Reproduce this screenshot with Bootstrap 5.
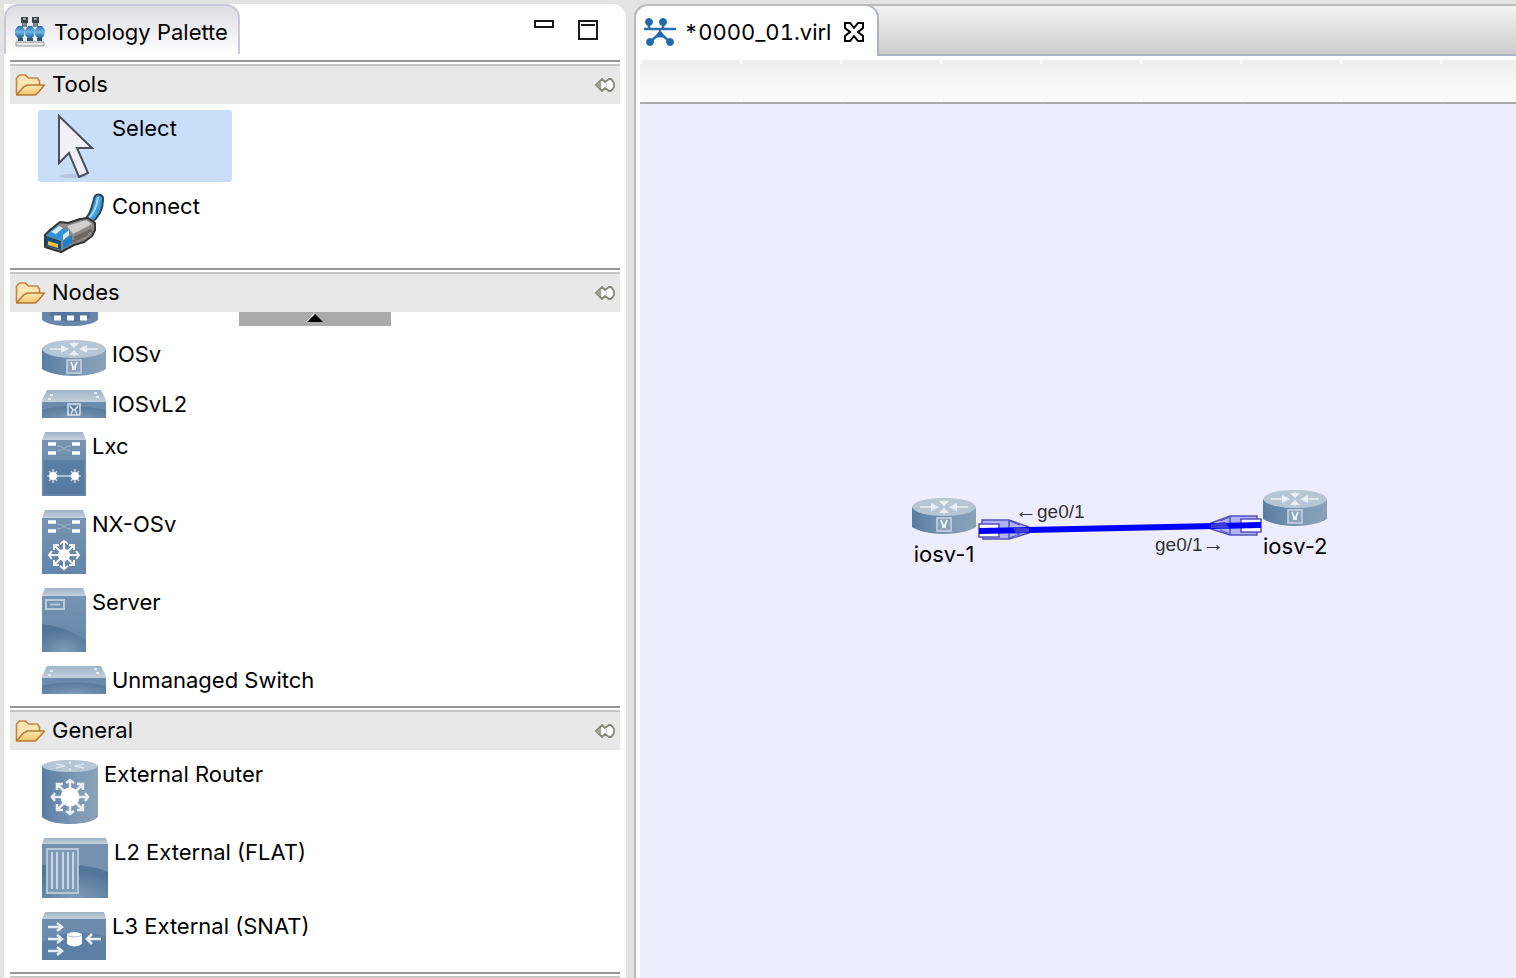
<!DOCTYPE html>
<html lang="en">
<head>
<meta charset="utf-8">
<meta name="viewport" content="width=device-width, initial-scale=1">
<title>Topology editor</title>
<link rel="stylesheet" href="https://cdn.jsdelivr.net/npm/bootstrap@5.3.0/dist/css/bootstrap.min.css">
<style>
body{background:#e3e3e3;color:#000;font-family:Inter,"Liberation Sans",sans-serif;font-size:22px;line-height:28px}
svg{display:block;flex:none}
button{color:inherit;background:none;border:0;padding:0}
.workbench{min-height:100vh;padding:4px 0 0 4px;gap:8px}
.palette{width:622px;background:#fff;border-radius:0 14px 0 0}
.palette-tab{width:236px;height:50px;padding:3px 10px 0 9px;gap:9px;border:2px solid #c9c9d9;border-bottom:0;border-radius:14px 14px 0 0;background:linear-gradient(#dcdce3,#fff)}
.view-actions{padding:13px 27px 0 0;gap:22px}
.drawers{padding:6px 6px 0}
.rules{height:6px;border-top:2px solid #969696;border-bottom:2px solid #c6c6c6}
.drawer-head{height:38px;padding:0 5px;gap:6px;background:#e8e8e8}
.drawer-head h2{font-size:22px;line-height:28px;font-weight:400;padding-bottom:2px}
.drawer-items{padding:6px 28px 8px;gap:6px}
.tool{padding:4px;gap:6px;border-radius:3px;text-align:left}
.tool.selected{width:194px;background:#c9def8}
.tool.cut{height:18px;padding-top:0;overflow:hidden}
.scroll-up{width:152px;height:14px;background:#aaa}
.editor{border-left:2px solid #bbb;border-radius:14px 0 0 0;background:#fff;min-width:0}
.editor-tabs{height:52px}
.editor-tab{position:relative;background:#fff;width:245px;padding:2px 12px 0 8px;gap:8px;margin-left:-2px;border:2px solid #bbb;border-right-color:#a8b2c8;border-bottom:0;border-radius:14px 14px 0 0;font-variant-numeric:tabular-nums}
.tab-rest{border-top:2px solid #bbb;border-bottom:2px solid #a8b2c8;background:linear-gradient(#f3f3f3,#cecece);margin-left:-14px;padding-left:14px}
.ruler{height:44px;margin:4px 0 0 4px;border-bottom:2px solid #aaa;background:repeating-linear-gradient(90deg,#fff 0 2px,transparent 2px 100px) 0 0/100% 4px no-repeat,repeating-linear-gradient(90deg,#fff 0 2px,transparent 2px 100px) 0 100%/100% 3px no-repeat,linear-gradient(#ececec,#f9f9f9 60%)}
.topology{margin-left:4px;background:#eeedfe;overflow:hidden}
.device,.port,.wire{position:absolute}
.device{gap:6px}
.port{font:19px/24px "Liberation Sans",sans-serif;color:#333;white-space:nowrap}
.port-arrow{font-size:22px}
</style>
</head>
<body>
<svg width="0" height="0" class="position-absolute" aria-hidden="true">
<defs>
<linearGradient id="side"><stop stop-color="#587da3"/><stop offset=".6" stop-color="#7e99b5"/><stop offset="1" stop-color="#8ba1b9"/></linearGradient>
<linearGradient id="lid" x2="0" y2="1"><stop stop-color="#9fb4c8"/><stop offset="1" stop-color="#c3d0dc"/></linearGradient>
<linearGradient id="front" x2="0" y2="1"><stop stop-color="#7794b3"/><stop offset="1" stop-color="#6384a8"/></linearGradient>
<radialGradient id="glow" cx=".5" cy="1" r=".8"><stop stop-color="#7f9bb8"/><stop offset="1" stop-color="#527599"/></radialGradient>
<linearGradient id="fold" x2="0" y2="1"><stop stop-color="#fdeab0"/><stop offset="1" stop-color="#f3c467"/></linearGradient>
<linearGradient id="blue" x2="0" y2="1"><stop stop-color="#2a6fa8"/><stop offset=".5" stop-color="#6fb6e6"/><stop offset="1" stop-color="#1d5f99"/></linearGradient>
<symbol id="router" viewBox="0 0 64 36">
<path d="M0 9V29C6 33 18 36 32 36S58 33 64 29V9Z" fill="url(#side)"/>
<path d="M0 9C2 3 15 0 32 0S62 3 64 9C62 15 48 18 32 18S2 15 0 9Z" fill="#b7c6d4"/>
<path d="M8 9H22M56 9H42M32 2V7M32 16V11" fill="none" stroke="#dbe4eb" stroke-width="2"/>
<path d="M19 5L27 9L19 13ZM45 5L37 9L45 13ZM27 3L32 8L37 3ZM27 15L32 10L37 15Z" fill="#e9eff4"/>
<path d="M25 20H39V33H25Z" fill="#8ba3bc" stroke="#c9d6e2" stroke-width="1.500"/><path d="M29 22L31 27V29H33V27L35 22" fill="none" stroke="#e6edf3" stroke-width="2"/>
</symbol>
<symbol id="switch" viewBox="0 0 64 28">
<path d="M5 0H59L64 10V12H0V10Z" fill="url(#lid)"/><path d="M0 12H64V28H0Z" fill="url(#glow)"/>
<path d="M0 12H64V20C48 16 20 15 0 20Z" fill="#6b8bad"/>
<path d="M8 5H11M6 9H9M52 3H55M54 7H57" stroke="#e6edf3" stroke-width="2"/>
</symbol>
<symbol id="tower" viewBox="0 0 44 64">
<path d="M3 0H41L44 8H0Z" fill="url(#lid)"/><path d="M0 8H44V64H0Z" fill="url(#front)"/>
</symbol>
<symbol id="ports" viewBox="0 0 44 32">
<path d="M6 12H14M30 12H38M6 21H14M30 21H38" stroke="#fff" stroke-width="3.500"/><path d="M15 14C22 14 22 19 29 19M15 19C22 19 22 14 29 14" fill="none" stroke="#a3b7cb"/>
</symbol>
<symbol id="folder" viewBox="0 0 30 24">
<path d="M1 21V5L4 2H10L13 5H22L24 8V12" fill="#fbe6b3" stroke="#bd8542" stroke-width="1.600"/>
<path d="M1 22L8 14L12 12H29L23 19L20 22Z" fill="url(#fold)" stroke="#b87a35" stroke-width="1.600" stroke-linejoin="round"/>
</symbol>
<symbol id="pin" viewBox="0 0 20 14">
<path d="M1 7L7 1L10 4L14 1H16L19 5V9L16 13H14L10 10L7 13Z" fill="#fff" stroke="#85857a" stroke-width="1.800"/><path d="M1 7L6 3V11Z" fill="#a2a296"/><path d="M10 4L12 7L10 10" fill="none" stroke="#c9c9bf"/>
</symbol>
</defs>
</svg>

<div class="workbench d-flex">
<aside class="palette flex-shrink-0">
<header class="d-flex justify-content-between align-items-start">
<div class="palette-tab d-flex align-items-center">
<svg width="30" height="32" viewBox="0 0 30 32" aria-hidden="true">
<path d="M6 1H13V7H6ZM17 1H24V7H17Z" fill="#3e454c"/><path d="M8 3H11M19 3H22" stroke="#9ba3aa" stroke-width="2"/><path d="M7 7H12V11H7ZM18 7H23V11H18Z" fill="#77838c"/>
<path d="M3 10H7L10 14L9 20L7 22H3L0 19V14ZM13 10H17L20 14L19 20L17 22H13L10 19V14ZM23 10H27L30 14L29 20L27 22H23L20 19V14Z" fill="url(#blue)"/>
<path d="M3 22H8V25H3ZM12 22H18V25H12ZM22 22H27V25H22Z" fill="#2c5778"/><path d="M1 26H29V30H1Z" fill="#e7e7e7" stroke="#939393"/>
</svg>
<span class="text-nowrap">Topology Palette</span>
</div>
<div class="view-actions d-flex">
<button type="button" aria-label="Minimize"><svg width="22" height="26" fill="#fff" stroke="#1a1a1a" stroke-width="2"><path d="M2 4H20V10H2Z"/></svg></button>
<button type="button" aria-label="Maximize"><svg width="22" height="26" fill="#fff" stroke="#1a1a1a" stroke-width="2"><path d="M2 4H20V22H2ZM4 8H18"/></svg></button>
</div>
</header>

<div class="drawers">
<section>
<div class="rules"></div>
<div class="drawer-head d-flex align-items-center"><svg width="31" height="24"><use href="#folder"/></svg><h2 class="m-0 flex-grow-1">Tools</h2><button type="button" aria-label="Pin Tools open"><svg width="20" height="14"><use href="#pin"/></svg></button></div>
<div class="drawer-items d-flex flex-column align-items-start">
<button type="button" class="tool selected d-flex"><svg width="64" height="64" viewBox="0 0 64 64"><ellipse cx="31" cy="62" rx="14" ry="2" fill="#9fb0c8" opacity=".5"/><path d="M17 2V49L27 39L37 63L46 59L35 34H50Z" fill="#f1f0f8" stroke="#4b4f58" stroke-width="2"/></svg>Select</button>
<button type="button" class="tool d-flex"><svg width="64" height="64" viewBox="0 0 64 64" stroke-linejoin="round">
<path d="M53 4C56 1 62 3 61 8C61 17 57 25 49 31L43 27C50 21 50 11 53 4Z" fill="#3f9fdf" stroke="#2f4557" stroke-width="2"/><path d="M56 5C55 14 53 20 47 26" fill="none" stroke="#a7dafa" stroke-width="2"/>
<path d="M3 43L8 38L18 30L26 31L38 27L46 26L53 31V38L50 44L42 50L32 53L19 60L3 55Z" fill="#8b8886" stroke="#333" stroke-width="2"/>
<path d="M25 34L44 28L50 32L31 42Z" fill="#d3cfcc"/><path d="M32 46L50 38M30 50L46 42" stroke="#6a6664" stroke-width="2.500"/>
<path d="M4 43L15 34L27 38L19 49Z" fill="#3491d4"/><path d="M9 40L17 34L21 36L14 42ZM21 43L27 38V43L21 48Z" fill="#d3edfb"/>
<path d="M4 44L19 49V58L4 54Z" fill="#174f7c"/><path d="M6 49L16 52V56L6 53Z" fill="#f2c23f"/><path d="M21 49L30 43V51L21 57Z" fill="#1c82cb"/></svg>Connect</button>
</div>
</section>

<section>
<div class="rules"></div>
<div class="drawer-head d-flex align-items-center"><svg width="31" height="24"><use href="#folder"/></svg><h2 class="m-0 flex-grow-1">Nodes</h2><button type="button" aria-label="Pin Nodes open"><svg width="20" height="14"><use href="#pin"/></svg></button></div>
<div class="drawer-items d-flex flex-column align-items-start position-relative pt-0">
<button type="button" class="scroll-up position-absolute top-0 start-50 translate-middle-x" aria-label="Scroll up"><svg class="mx-auto" width="18" height="14"><path d="M0 10L8 1L9 2L2 10Z" fill="#fff"/><path d="M1 10L9 2L17 10Z"/></svg></button>
<button type="button" class="tool cut d-flex" aria-label="Previous node type"><svg width="56" height="14"><path d="M0 0H56V8C50 12 42 14 28 14S6 12 0 8Z" fill="#6887aa"/><path d="M8 0H48V6Q28 15 8 4Z" fill="#53769c"/><path d="M12 6H19M25 6H32M38 6H45" stroke="#fff" stroke-width="5"/></svg></button>
<button type="button" class="tool d-flex"><svg width="64" height="36"><use href="#router"/></svg>IOSv</button>
<button type="button" class="tool d-flex"><svg width="64" height="28"><use href="#switch"/><path d="M26 14H38V25H26ZM28 16L31 20H33L36 16M29 24L31 20M35 24L33 20" fill="none" stroke="#d7e0e9" stroke-width="1.500"/></svg>IOSvL2</button>
<button type="button" class="tool d-flex"><svg width="44" height="64"><use href="#tower"/><use href="#ports" width="44" height="32"/><path d="M2 28H42V62H2Z" fill="#4d7199" opacity=".55"/><path d="M11 44H33" stroke="#a9bfd3" stroke-width="2"/><g stroke="#c3d2e0" stroke-width="1.500"><path d="M5 44H17M11 37V51M7 39L15 49M15 39L7 49M27 44H39M33 37V51M29 39L37 49M37 39L29 49"/></g><circle cx="11" cy="44" r="4" fill="#fff"/><circle cx="33" cy="44" r="4" fill="#fff"/></svg>Lxc</button>
<button type="button" class="tool d-flex"><svg width="44" height="64"><use href="#tower"/><use href="#ports" width="44" height="32"/><g fill="none" stroke="#f4f7fa" stroke-width="2"><path d="M8 45H36M22 31V59M12 35L32 55M32 35L12 55M18 34L22 31L26 34M18 56L22 59L26 56M10 41L7 45L10 49M34 41L37 45L34 49M12 40V35H17M27 35H32V40M12 50V55H17M27 55H32V50"/></g><circle cx="22" cy="45" r="6" fill="#fff"/></svg>NX-OSv</button>
<button type="button" class="tool d-flex"><svg width="44" height="64"><use href="#tower"/><path d="M0 36C16 38 32 44 44 52V64H0Z" fill="url(#glow)"/><path d="M0 25H44" stroke="#6d8cad"/><path d="M4 12H22V21H4ZM8 16.500H18" fill="none" stroke="#b9cad9" stroke-width="2"/></svg>Server</button>
<button type="button" class="tool d-flex"><svg width="64" height="28"><use href="#switch"/></svg>Unmanaged Switch</button>
</div>
</section>

<section>
<div class="rules"></div>
<div class="drawer-head d-flex align-items-center"><svg width="31" height="24"><use href="#folder"/></svg><h2 class="m-0 flex-grow-1">General</h2><button type="button" aria-label="Pin General open"><svg width="20" height="14"><use href="#pin"/></svg></button></div>
<div class="drawer-items d-flex flex-column align-items-start">
<button type="button" class="tool d-flex"><svg width="56" height="64"><path d="M0 6V57C6 62 16 64 28 64S50 62 56 57V6Z" fill="url(#side)"/><path d="M0 6C2 2 14 0 28 0S54 2 56 6C54 10 42 12 28 12S2 10 0 6Z" fill="#b7c6d4"/><path d="M14 4L23 6L14 8M42 4L33 6L42 8M28 1V4M28 8V11" stroke="#dfe7ee" stroke-width="1.500" fill="none"/><g fill="none" stroke="#e8eef4" stroke-width="2.500"><path d="M10 37H46M28 20V54M16 25L40 49M40 25L16 49M13 33L10 37L13 41M43 33L46 37L43 41M24 23L28 20L32 23M24 51L28 54L32 51M15 30V24H21M35 24H41V30M15 44V50H21M35 50H41V44"/></g><circle cx="28" cy="37" r="9.500" fill="#fff"/></svg>External Router</button>
<button type="button" class="tool d-flex"><svg width="66" height="60"><path d="M2 0H64L66 6H0Z" fill="url(#lid)"/><path d="M0 6H66V60H0Z" fill="#7491b0"/><path d="M0 27C26 25 50 27 66 34V60H0Z" fill="url(#glow)"/><path d="M5 11H36V55H5Z" fill="#809bb7" stroke="#b5c6d6" stroke-width="2"/><path d="M10 14V51M15 14V51M21 14V51M26 14V51M31 14V51" stroke="#c9d6e2" stroke-width="2"/></svg>L2 External (FLAT)</button>
<button type="button" class="tool d-flex"><svg width="64" height="48"><path d="M3 0H62L64 7H0Z" fill="url(#lid)"/><path d="M0 7H64V48H0Z" fill="#5c7fa5"/><path d="M0 7H64V24C40 18 20 20 0 30Z" fill="#6c8bad"/><path d="M6 15H19M6 27H19M6 39H19M59 27H46M15 11L20 15L15 19M15 23L20 27L15 31M15 35L20 39L15 43M50 22L45 27L50 32" fill="none" stroke="#e6edf3" stroke-width="2.500"/><path d="M25 22Q32 18 40 22V32Q32 37 25 32Z" fill="#fff"/><path d="M26 24Q32 26 39 24" fill="none" stroke="#aebfce"/></svg>L3 External (SNAT)</button>
</div>
<div class="rules"></div>
</section>
</div>
</aside>

<main class="editor flex-grow-1 d-flex flex-column">
<div class="editor-tabs d-flex">
<div class="editor-tab d-flex align-items-center flex-shrink-0">
<svg width="32" height="30" viewBox="0 0 32 30" stroke="#2a70b0" fill="#2068ae" aria-hidden="true"><path d="M0 12H32M5 5V12M19 5V12M16 16L6 25M16 16L26 25" fill="none" stroke-width="2.500"/><circle cx="5" cy="5" r="3.500"/><circle cx="19" cy="5" r="3.500"/><path d="M16 13L20 20H12Z"/><circle cx="6" cy="25" r="3.500"/><circle cx="26" cy="25" r="3.500"/></svg>
<span class="text-nowrap flex-grow-1">*0000_01.virl</span>
<button type="button" aria-label="Close"><svg width="22" height="22" fill="#fff" stroke="#000" stroke-width="2"><path d="M2 2H7L11 7L15 2H20V7L15 11L20 15V20H15L11 15L7 20H2V15L7 11L2 7Z"/></svg></button>
</div>
<div class="tab-rest flex-grow-1"></div>
</div>
<div class="ruler"></div>
<div class="topology position-relative flex-grow-1">
<svg class="wire" style="left:336px;top:406px" width="290" height="36" viewBox="976 510 290 36" aria-hidden="true">
<g fill="#b0b0fb" stroke="#5552b8" stroke-width="1.500"><path d="M982 524V520H1009L1029 527V533L1009 539H983V536"/><path d="M1009 520V539"/><path d="M1257 519V516H1230L1211 523V529L1230 535H1257V532"/><path d="M1230 516V535"/></g>
<path d="M979 524H999V537H979ZM1241 519H1261V532H1241Z" fill="#fff" stroke="#5552b8" stroke-width="1.500"/>
<path d="M979 531L1261 525" stroke="#00f" stroke-width="6"/>
<path d="M1012 527L1029 528V532L1017 534ZM1225 522L1211 524V528L1230 529Z" fill="#3c3cd3"/>
<path d="M1009 521L1020 525M1009 538L1020 534M1230 517L1220 521M1230 534L1220 530" stroke="#5552b8"/>
</svg>
<div class="device d-flex flex-column align-items-center" style="left:272px;top:394px"><svg width="64" height="36"><use href="#router"/></svg><span>iosv-1</span></div>
<div class="device d-flex flex-column align-items-center" style="left:623px;top:386px"><svg width="64" height="36"><use href="#router"/></svg><span>iosv-2</span></div>
<span class="port" style="left:375px;top:395px"><span class="port-arrow">←</span>ge0/1</span>
<span class="port" style="left:515px;top:428px">ge0/1<span class="port-arrow">→</span></span>
</div>
</main>
</div>
<script src="https://cdn.jsdelivr.net/npm/bootstrap@5.3.0/dist/js/bootstrap.bundle.min.js"></script>
</body>
</html>
